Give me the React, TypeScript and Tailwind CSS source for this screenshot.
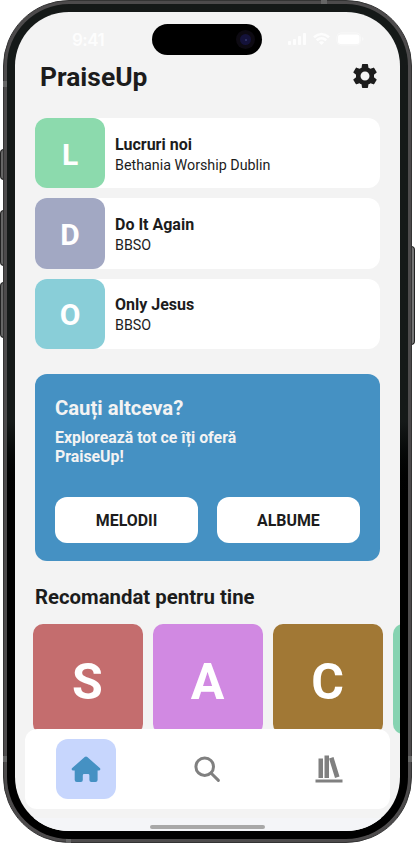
import React from "react";
import { MdSettings } from "react-icons/md";

const songs = [
  { letter: "L", color: "bg-[#8cdaad]", title: "Lucruri noi", artist: "Bethania Worship Dublin" },
  { letter: "D", color: "bg-[#a2a8c3]", title: "Do It Again", artist: "BBSO" },
  { letter: "O", color: "bg-[#89ced8]", title: "Only Jesus", artist: "BBSO" },
];

const albums = [
  { letter: "S", color: "bg-[#c46d6e]" },
  { letter: "A", color: "bg-[#d189e2]" },
  { letter: "C", color: "bg-[#a17835]" },
  { letter: "", color: "bg-[#86d3b1]" },
];

function StatusBar() {
  return (
    <div className="flex h-[43px] shrink-0 pt-3">
      <div className="w-[137px] pl-[57px] pt-[4px] font-['Inter'] text-[17px] leading-6 font-semibold tracking-[-0.5px] text-[#fdfdfd]">
        9:41
      </div>
      <div className="flex h-[31px] w-[110px] items-center justify-end rounded-full bg-black pr-[7px]">
        <div className="flex size-[19px] items-center justify-center rounded-full bg-[#0d0a12]">
          <div className="flex size-[11px] items-center justify-center rounded-full bg-[#14123a]">
            <div className="size-[2px] rounded-full bg-[#34386f]" />
          </div>
        </div>
      </div>
      <svg className="mt-2 ml-[26px]" width="78" height="16" viewBox="0 0 78 16" fill="#fdfdfd">
        <rect x="0" y="9" width="3" height="4" rx="0.8" />
        <rect x="5" y="7" width="3" height="6" rx="0.8" />
        <rect x="10" y="4" width="3" height="9" rx="0.8" />
        <rect x="15" y="1" width="3" height="12" rx="0.8" />
        <g fill="none" stroke="#fdfdfd" strokeWidth="2.6">
          <path d="M26 5.2Q33.5-1.2 41 5.2" />
          <path d="M28.7 8.3Q33.5 4.2 38.3 8.3" />
        </g>
        <path d="M30.8 10.3Q33.5 8 36.2 10.3L33.5 13Z" />
        <rect x="49" y="1" width="23.5" height="12" rx="3.8" fill="none" stroke="#f8f8f8" />
        <rect x="50" y="2.5" width="21.5" height="9.5" rx="2.5" fill="#fff" />
        <path d="M74 5q3 2 0 4z" fill="#f8f8f8" />
      </svg>
    </div>
  );
}

function SongList() {
  return (
    <div className="mx-5 mt-[14px] flex shrink-0 flex-col gap-[10px]">
      {songs.map((s) => (
        <div key={s.title} className="flex h-[70.3px] items-center rounded-xl bg-white">
          <div className={`flex h-[70.3px] w-[70px] items-center justify-center rounded-xl pt-[2px] text-[30px] font-bold text-white ${s.color}`}>
            {s.letter}
          </div>
          <div className="ml-[10px] pt-[2px]">
            <div className="text-[16px] leading-[21px] font-bold">{s.title}</div>
            <div className="text-[14.3px] leading-5">{s.artist}</div>
          </div>
        </div>
      ))}
    </div>
  );
}

function ExploreCard() {
  return (
    <div className="mx-5 mt-[25px] h-[187.5px] shrink-0 rounded-xl bg-[#4591c3] px-5 pt-[22.5px]">
      <div className="text-[20.3px] leading-[25px] font-bold text-[#f3f3f3]">Cauți altceva?</div>
      <div className="mt-[6.5px] w-[200px] text-[15.85px] leading-[19px] font-bold text-[#f3f3f3]">
        Explorează tot ce îți oferă PraiseUp!
      </div>
      <div className="mt-[30.7px] grid grid-cols-2 gap-[18.5px]">
        {["MELODII", "ALBUME"].map((label) => (
          <button key={label} className="h-[46px] rounded-xl bg-white pt-[2px] text-[15.9px] font-bold">
            {label}
          </button>
        ))}
      </div>
    </div>
  );
}

function NavBar() {
  return (
    <nav className="absolute top-[717px] left-[10px] grid h-[80px] w-[365px] grid-cols-3 items-center justify-items-center rounded-xl bg-white">
      <div className="flex size-[60px] items-center justify-center rounded-xl bg-[#c7d6fd]">
        <svg width="30" height="27" viewBox="0 0 30 27" fill="#4591c3">
          <path d="M13.7 1.1Q15 0 16.3 1.1L28.8 12Q29.5 12.6 29.3 13.5Q29 14.5 28 14.5H26.6V23.9Q26.6 26 24.5 26H20.3Q18.4 26 18.4 24.1V19.4Q18.4 18.1 17.1 18.1H13.1Q11.8 18.1 11.8 19.4V24.1Q11.8 26 9.9 26H5.8Q3.7 26 3.7 23.9V14.5H2Q1 14.5.7 13.5Q.5 12.6 1.2 12Z" />
        </svg>
      </div>
      <svg width="28" height="28" viewBox="0 0 28 28" fill="none" stroke="#808080" strokeWidth="3" strokeLinecap="round">
        <circle cx="11.7" cy="11.7" r="8.8" />
        <path d="m18.2 18.2 7.2 7.2" />
      </svg>
      <svg width="36" height="36" viewBox="0 0 24 24" fill="#808080">
        <path d="M9 3v15h3V3H9m3 2 4 13 3-1-4-13-3 1M5 5v13h3V5H5M3 19v2h18v-2H3z" />
      </svg>
    </nav>
  );
}

export default function App() {
  return (
    <div className="relative h-[843px] w-[415px] overflow-hidden bg-white pl-[3px] font-['Roboto',sans-serif] text-[#1c1c1c]">
      {/* Hardware buttons */}
      <div className="absolute top-[149px] left-0 h-[31px] w-1 rounded-l-sm border border-[#222] bg-[#666]" />
      <div className="absolute top-[210px] left-0 h-[56px] w-1 rounded-l-sm border border-[#222] bg-[#666]" />
      <div className="absolute top-[282px] left-0 h-[56px] w-1 rounded-l-sm border border-[#222] bg-[#666]" />
      <div className="absolute top-[246px] left-[411px] h-[99px] w-1 rounded-r-sm border border-[#222] bg-[#777]" />

      <div className="relative h-[843px] w-[409px] rounded-[66px] border border-[#343434] bg-[#4d4b4c] p-[3px]">
        <div className="h-full w-full rounded-[62px] bg-linear-to-b from-[#151918] from-0% via-[#151918] via-50% to-black to-60% p-2">
          <div className="relative flex h-[819px] w-[385px] flex-col overflow-hidden rounded-[54px] bg-[#f3f3f3]">
            <StatusBar />
            <header className="flex h-[49px] shrink-0 items-start justify-between pr-5 pl-[25px]">
              <h1 className="mt-[5.5px] text-[26.4px] leading-8 font-bold">PraiseUp</h1>
              <MdSettings className="mt-[5.7px] size-[30px]" />
            </header>
            <SongList />
            <ExploreCard />
            <h2 className="mt-[22.8px] ml-5 shrink-0 text-[20.35px] leading-[26px] font-bold">Recomandat pentru tine</h2>
            <div className="mt-[14.3px] ml-[17.5px] flex shrink-0 gap-[10px]">
              {albums.map((a) => (
                <div
                  key={a.color}
                  className={`flex size-[110px] shrink-0 items-center justify-center rounded-[10px] pt-[6px] text-[50px] font-bold text-white ${a.color}`}
                >
                  {a.letter}
                </div>
              ))}
            </div>
            <NavBar />
            <div className="mt-auto flex h-[13px] shrink-0 items-start justify-center bg-[#f4f5f8] pt-[7px]">
              <div className="h-1 w-[115px] rounded-full bg-[#a8a8a8]" />
            </div>
          </div>
        </div>
      </div>
      {/* Antenna bands on the frame */}
      <div className="absolute top-0 left-[321px] h-1 w-[6px] bg-[#666]" />
      <div className="absolute top-[81px] left-[3px] h-[6px] w-1 bg-[#666]" />
      <div className="absolute top-[756px] left-[3px] h-[6px] w-1 bg-[#666]" />
      <div className="absolute top-[756px] left-[408px] h-[6px] w-1 bg-[#666]" />
      <div className="absolute top-[839px] left-[66px] h-1 w-[5px] bg-[#666]" />
    </div>
  );
}
